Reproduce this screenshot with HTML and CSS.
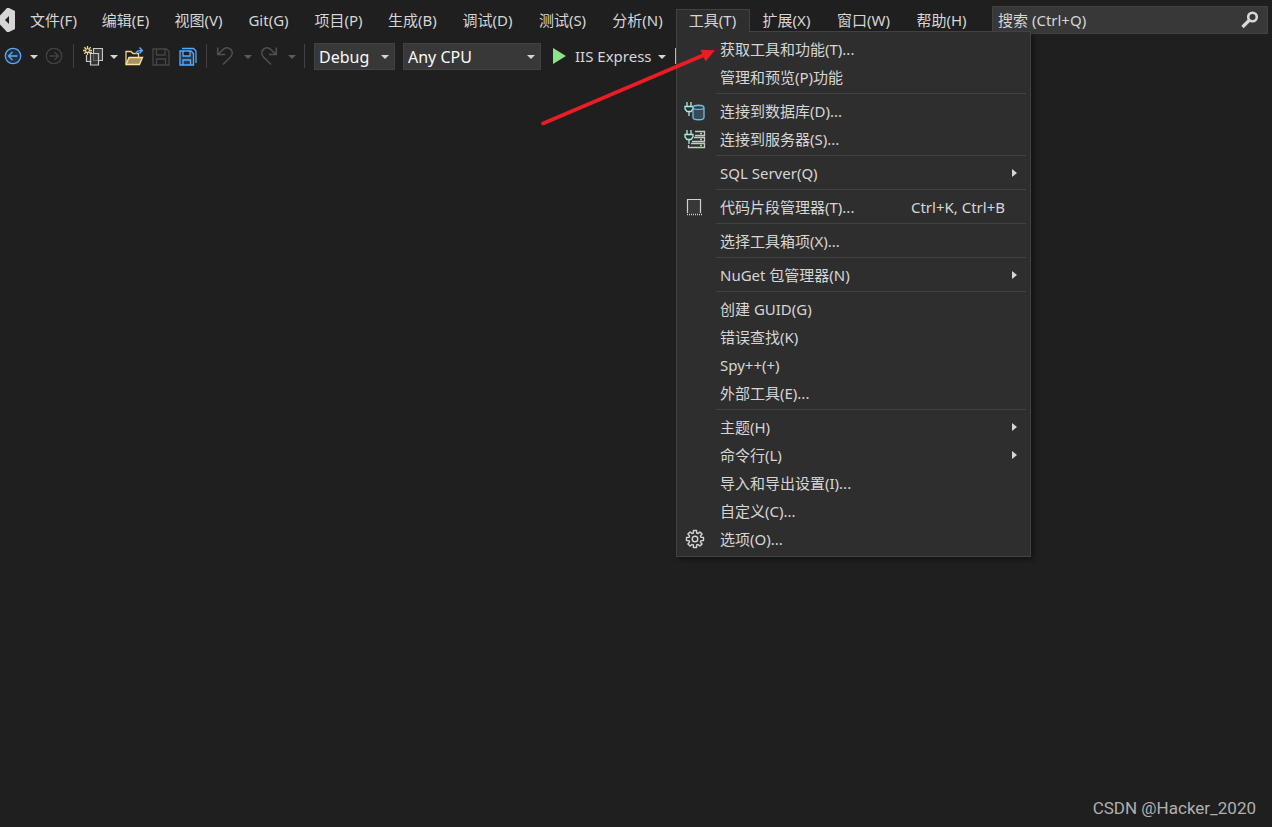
FILE: index.html
```html
<!DOCTYPE html>
<html lang="zh-CN">
<head>
<meta charset="utf-8">
<title>Visual Studio</title>
<link rel="stylesheet" href="styles.css">
</head>
<body>
<header class="menubar">
  <svg class="logo" viewBox="0 0 16 24" aria-hidden="true"><path fill="#d6d6d6" fill-rule="evenodd" d="M9 0 15 3V21L9 24H7L0 16.500V7.500L7 0ZM9 8 5 12 9 16Z"/></svg>
  <nav class="menus">
    <button class="menu">文件(F)</button>
    <button class="menu">编辑(E)</button>
    <button class="menu menu-74">视图(V)</button>
    <button class="menu menu-66">Git(G)</button>
    <button class="menu menu-74">项目(P)</button>
    <button class="menu menu-74">生成(B)</button>
    <button class="menu menu-76">调试(D)</button>
    <button class="menu menu-74">测试(S)</button>
    <button class="menu menu-76">分析(N)</button>
    <div class="menu-host">
      <button class="menu menu-74 open" aria-expanded="true">工具(T)</button>
      <div class="popup" role="menu">
        <button class="item" role="menuitem"><span class="label">获取工具和功能(T)...</span></button>
        <button class="item" role="menuitem"><span class="label">管理和预览(P)功能</span></button>
        <hr class="rule">
        <button class="item" role="menuitem">
          <svg class="item-icon" viewBox="0 0 22 20" fill="none"><path stroke="#a8efe2" stroke-width="1.300" d="M3 1V5M7 1V5M1 5.500H9V8L7 10.500H3L1 8ZM5 11V15"/><path fill="#344b58" stroke="#6fbde5" stroke-width="1.300" d="M9 6.500C9 3.500 20 3.500 20 6.500V16.500C20 19.500 9 19.500 9 16.500ZM9 6.500C9 9 20 9 20 6.500"/></svg>
          <span class="label">连接到数据库(D)...</span></button>
        <button class="item" role="menuitem">
          <svg class="item-icon" viewBox="0 0 22 20" fill="none"><path stroke="#a8efe2" stroke-width="1.300" d="M3 1V5M7 1V5M1 5.500H9V8L7 10.500H3L1 8ZM5 11V15"/><path stroke="#c8c8c8" stroke-width="1.300" d="M11 2.500H20.500V6.500H11M10 8.500H20.500V12.500H8M7 14.500H20.500V18.500H4.500V16"/><path stroke="#8ae28a" stroke-width="1.300" d="M16 4.500H18M16 10.500H18M16 16.500H18"/></svg>
          <span class="label">连接到服务器(S)...</span></button>
        <hr class="rule">
        <button class="item" role="menuitem"><span class="label">SQL Server(Q)</span><svg class="sub" viewBox="0 0 5 8"><path d="M0 0 5 4 0 8Z"/></svg></button>
        <hr class="rule">
        <button class="item" role="menuitem">
          <svg class="item-icon" viewBox="0 0 22 20" fill="none"><path fill="#383838" stroke="#d0d0d0" stroke-width="1.200" d="M3.500 16V2.500H16.500V16"/><path stroke="#d0d0d0" stroke-width="1.500" stroke-dasharray="1 1" d="M3 17.500H18"/></svg>
          <span class="label">代码片段管理器(T)...</span><span class="keys">Ctrl+K, Ctrl+B</span></button>
        <hr class="rule">
        <button class="item" role="menuitem"><span class="label">选择工具箱项(X)...</span></button>
        <hr class="rule">
        <button class="item" role="menuitem"><span class="label">NuGet 包管理器(N)</span><svg class="sub" viewBox="0 0 5 8"><path d="M0 0 5 4 0 8Z"/></svg></button>
        <hr class="rule">
        <button class="item" role="menuitem"><span class="label">创建 GUID(G)</span></button>
        <button class="item" role="menuitem"><span class="label">错误查找(K)</span></button>
        <button class="item" role="menuitem"><span class="label">Spy++(+)</span></button>
        <button class="item" role="menuitem"><span class="label">外部工具(E)...</span></button>
        <hr class="rule">
        <button class="item" role="menuitem"><span class="label">主题(H)</span><svg class="sub" viewBox="0 0 5 8"><path d="M0 0 5 4 0 8Z"/></svg></button>
        <button class="item" role="menuitem"><span class="label">命令行(L)</span><svg class="sub" viewBox="0 0 5 8"><path d="M0 0 5 4 0 8Z"/></svg></button>
        <button class="item" role="menuitem"><span class="label">导入和导出设置(I)...</span></button>
        <button class="item" role="menuitem"><span class="label">自定义(C)...</span></button>
        <button class="item" role="menuitem">
          <svg class="item-icon" viewBox="0 0 22 20" fill="none" stroke="#d4d4d4" stroke-width="1.400"><path stroke-linejoin="round" d="M9.400 4V1.500H12.600V4L14.100 4.600 15.900 2.900 18.100 5.100 16.400 6.900 17 8.400H19.500V11.600H17L16.400 13.100 18.100 14.900 15.900 17.100 14.100 15.400 12.600 16V18.500H9.400V16L7.900 15.400 6.100 17.100 3.900 14.900 5.600 13.100 5 11.600H2.500V8.400H5L5.600 6.900 3.900 5.100 6.100 2.900 7.900 4.600Z"/><circle cx="11" cy="10" r="2.800"/></svg>
          <span class="label">选项(O)...</span></button>
      </div>
    </div>
    <button class="menu menu-74">扩展(X)</button>
    <button class="menu menu-80">窗口(W)</button>
    <button class="menu menu-76">帮助(H)</button>
  </nav>
  <label class="search">
    <input class="search-input" type="search" placeholder="搜索 (Ctrl+Q)" aria-label="搜索">
    <svg class="search-icon" viewBox="0 0 18 18" fill="none" stroke="#d8d8d8"><circle cx="11.500" cy="6" r="4.300" stroke-width="2.600"/><path stroke-width="3.200" d="M8.500 9 1.500 16"/></svg>
  </label>
</header>

<div class="toolbar" role="toolbar">
  <button class="tool back" aria-label="后退"><svg class="icon" viewBox="0 0 20 20" fill="none" stroke="#55aaff" stroke-width="1.300"><circle cx="10" cy="10" r="7.700" fill="#23303d"/><path d="M14.500 10H6M9.500 6 5.500 10 9.500 14"/></svg></button>
  <button class="drop" aria-label="后退历史"><svg class="caret" viewBox="0 0 8 4"><path d="M0 0H8L4 4Z"/></svg></button>
  <button class="tool forward" aria-label="前进" disabled><svg class="icon" viewBox="0 0 20 20" fill="none" stroke="#434343" stroke-width="1.300"><circle cx="10" cy="10" r="7.700"/><path d="M5.500 10H14M10.500 6 14.500 10 10.500 14"/></svg></button>
  <span class="divider"></span>
  <button class="tool" aria-label="新建项目"><svg class="icon" viewBox="0 0 20 20" fill="none"><path fill="#2f2f2f" stroke="#c8c8c8" stroke-width="1.200" d="M3.500 9V15.500H9M9 6.500H4"/><path fill="#3b3b3b" stroke="#c8c8c8" stroke-width="1.200" d="M10.500 2.500H19.500V14.500H10.500Z"/><path fill="#3b3b3b" fill-opacity="0.700" stroke="#c8c8c8" stroke-width="1.200" d="M7.500 7.500H15.500V19H7.500Z"/><path stroke="#f5d38c" stroke-width="1.300" d="M4.500 0V9M0 4.500H9M1.300 1.300 7.700 7.700M7.700 1.300 1.300 7.700"/><circle cx="4.500" cy="4.500" r="1.300" fill="#1f1f1f"/></svg></button>
  <button class="drop" aria-label="新建选项"><svg class="caret" viewBox="0 0 8 4"><path d="M0 0H8L4 4Z"/></svg></button>
  <button class="tool open-file" aria-label="打开文件"><svg class="icon" viewBox="0 0 20 20" fill="none"><path stroke="#efd28d" stroke-width="1.300" d="M2 18V5.500H7L9 7.500H14.500V11"/><path fill="#a79266" stroke="#ffe1a0" stroke-width="1.300" d="M5 11.500H18.500L15.500 18.500H2Z"/><path stroke="#55aaff" stroke-width="1.500" d="M12 8C12.500 5 14 4.500 18 4.500M15.500 1.500 18.300 4.500 15.500 7.500"/></svg></button>
  <button class="tool save" aria-label="保存" disabled><svg class="icon" viewBox="0 0 20 20" fill="none" stroke="#464646" stroke-width="1.300"><path d="M2 3H15.500L18 5.500V19H2ZM5.500 3V9H14V3M5.500 19V13H14.500V19"/></svg></button>
  <button class="tool save-all" aria-label="全部保存"><svg class="icon" viewBox="0 0 20 20" fill="none" stroke="#55aaff" stroke-width="1.300"><path fill="#263a50" d="M2 5H13L15.500 7.500V19H2ZM5 5V10H12V5M5 19V14H12.500V19"/><path d="M4 2.500H15.500L18 5V17"/></svg></button>
  <span class="divider"></span>
  <button class="tool undo" aria-label="撤销" disabled><svg class="icon" viewBox="0 0 20 20" fill="none" stroke="#515151" stroke-width="1.500"><path d="M1.700 1.500V8.500H9M2 8.500 6.500 4C12.500-1.500 19.500 5.500 14.500 11L7 18.500"/></svg></button>
  <button class="drop" aria-label="撤销历史" disabled><svg class="caret" viewBox="0 0 8 4"><path d="M0 0H8L4 4Z"/></svg></button>
  <button class="tool redo" aria-label="重做" disabled><svg class="icon" viewBox="0 0 20 20" fill="none" stroke="#515151" stroke-width="1.500"><path d="M18.300 1.500V8.500H11M18 8.500 13.500 4C7.500-1.500 0.500 5.500 5.500 11L13 18.500"/></svg></button>
  <button class="drop redo-drop" aria-label="重做历史" disabled><svg class="caret" viewBox="0 0 8 4"><path d="M0 0H8L4 4Z"/></svg></button>
  <span class="divider"></span>
  <label class="combo combo-config"><select class="combo-box" aria-label="解决方案配置"><option>Debug</option></select><svg class="caret" viewBox="0 0 8 4"><path d="M0 0H8L4 4Z"/></svg></label>
  <label class="combo combo-platform"><select class="combo-box" aria-label="解决方案平台"><option>Any CPU</option></select><svg class="caret" viewBox="0 0 8 4"><path d="M0 0H8L4 4Z"/></svg></label>
  <button class="run"><svg class="play" viewBox="0 0 13 16"><path fill="#8ae28a" d="M0 0 13 8 0 16Z"/></svg><span>IIS Express</span><svg class="caret" viewBox="0 0 8 4"><path d="M0 0H8L4 4Z"/></svg></button>
  <span class="run-next"></span>
</div>

<main class="workspace"><p class="credit">CSDN @Hacker_2020</p></main>

<svg class="pointer" viewBox="0 0 180 80" aria-hidden="true"><path stroke="#ec1c24" stroke-width="3.600" stroke-linecap="round" d="M3 74.500 164 6"/><path fill="#ec1c24" d="M175 1.300 160.500 0.800 165.500 12.500Z"/></svg>
</body>
</html>
```
FILE: styles.css
```css
* { box-sizing: border-box; }

body {
  margin: 0;
  min-height: 100vh;
  display: flex;
  flex-direction: column;
  background: #1f1f1f;
  color: #d6d6d6;
  font: 15px/20px "Noto Sans", "Noto Sans CJK SC", sans-serif;
}

button, input, select {
  font: inherit;
  color: inherit;
  background: none;
  border: 0;
  padding: 0;
  margin: 0;
}

svg { display: block; flex: none; }

.menubar {
  display: flex;
  align-items: center;
  height: 40px;
  padding-right: 4px;
}
.logo { width: 16px; height: 24px; margin-right: 2px; }
.menus { display: flex; align-items: center; }
.menu {
  width: 72px;
  height: 22px;
  padding-right: 1px;
  white-space: nowrap;
  text-align: center;
}
.menu-66 { width: 66px; }
.menu-74 { width: 74px; }
.menu-76 { width: 76px; }
.menu-80 { width: 80px; }

.menu-host { position: relative; }
.menu-host .open {
  position: relative;
  z-index: 2;
  display: block;
  height: 23px;
  margin-bottom: -1px;
  padding-bottom: 2px;
  background: #2e2e2e;
  border: 1px solid #424242;
  border-bottom: 0;
}
.popup {
  position: absolute;
  z-index: 1;
  top: 100%;
  left: 0;
  width: 355px;
  padding: 3px 4px;
  background: #2e2e2e;
  border: 1px solid #424242;
  box-shadow: 3px 3px 4px rgba(0, 0, 0, 0.35);
}

.item {
  display: grid;
  grid-template-columns: 36px 1fr auto;
  align-items: center;
  column-gap: 3px;
  width: 100%;
  height: 28px;
  text-align: left;
}
.item-icon { width: 22px; height: 20px; margin-left: 3px; }
.label { grid-column: 2; white-space: nowrap; }
.keys { margin-right: 21px; }
.sub { width: 5px; height: 8px; margin-right: 9px; fill: #d6d6d6; }
.rule {
  height: 1px;
  margin: 2px 0 3px 35px;
  border: 0;
  background: #424242;
}

.search {
  flex: 1;
  display: flex;
  align-items: center;
  height: 28px;
  margin-left: 12px;
  padding: 0 8px 0 5px;
  background: #383838;
  border: 1px solid #424242;
}
.search-input { flex: 1; min-width: 0; outline: 0; appearance: none; }
.search-input::placeholder { color: #d6d6d6; opacity: 1; }
.search-icon { width: 18px; height: 18px; }

.toolbar {
  display: flex;
  align-items: center;
  height: 32px;
  padding-left: 3px;
}
.icon { width: 20px; height: 20px; }
.caret { width: 8px; height: 4px; margin-top: 1px; fill: #d6d6d6; }
.drop { padding: 8px 7px; }
.drop:disabled .caret { fill: #5a5a5a; }
.divider { width: 1px; height: 24px; background: #424242; margin: 0 9px; }
.forward, .open-file, .redo { margin-left: -1px; }
.save { margin: 0 7px; }
.save-all { margin-right: -1px; }
.undo { margin-right: 1px; }
.redo { margin-right: 3px; }
.redo-drop { margin-right: -8px; }

.combo {
  display: flex;
  align-items: center;
  height: 27px;
  margin: 1px 8px 0 0;
  padding: 0 5px 0 4px;
  background: #383838;
  border: 1px solid #424242;
  color: #fafafa;
  font-size: 16px;
}
.combo-config { width: 81px; }
.combo-platform { width: 138px; margin-right: 12px; }
.combo-box { flex: 1; min-width: 0; appearance: none; outline: 0; }
.run { display: flex; align-items: center; gap: 6px; white-space: nowrap; }
.play { width: 13px; height: 16px; margin-right: 3px; }
.run-next { width: 2px; height: 16px; margin-left: 9px; background: #8ae28a; }

.workspace {
  flex: 1;
  display: flex;
  align-items: flex-end;
  justify-content: flex-end;
  padding: 0 16px 9px;
}
.credit { margin: 0; color: #b0b0b0; font: 17px/20px Roboto, sans-serif; }

.pointer {
  position: absolute;
  z-index: 3;
  top: 49px;
  left: 540px;
  width: 180px;
  height: 80px;
  pointer-events: none;
}
```
